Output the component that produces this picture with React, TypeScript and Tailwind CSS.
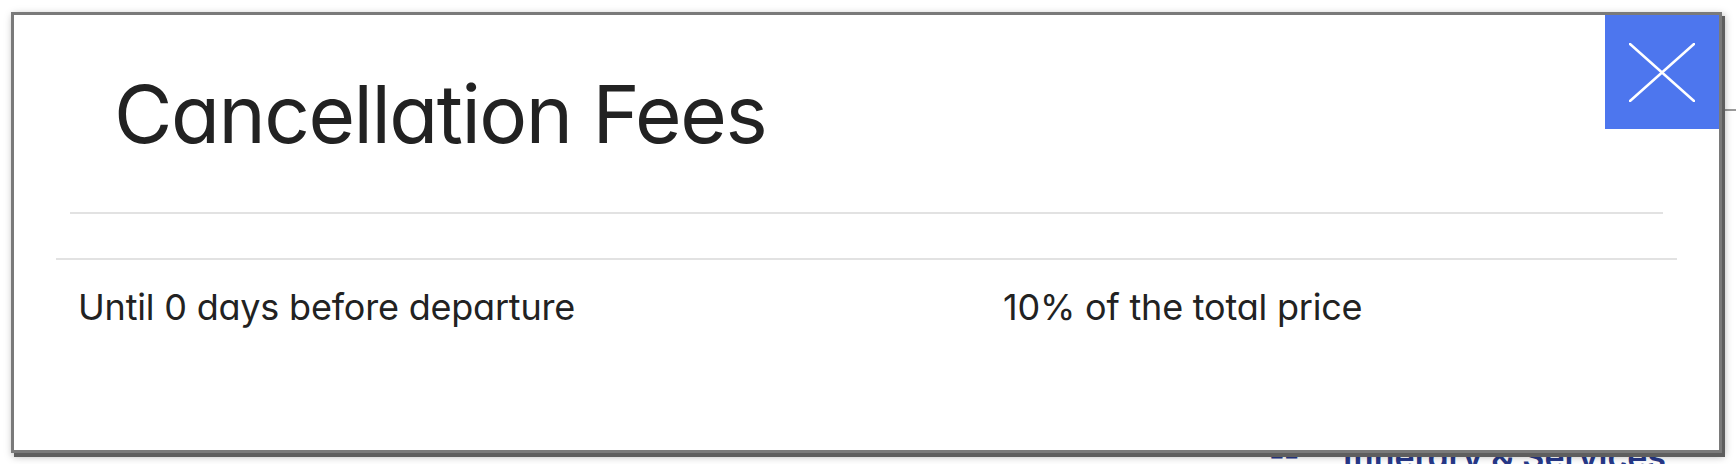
import * as React from 'react';

const fee = {
  label: 'Until 0 days before departure',
  value: '10% of the total price',
};

const CloseIcon = () => (
  <svg width="66" height="59" viewBox="0 0 66 59" fill="none">
    <path d="M1 1 L65 58 M65 1 L1 58" stroke="white" strokeWidth="2.5" strokeLinecap="round" />
  </svg>
);

const App = () => {
  return (
    <main className="relative w-[1736px] h-[464px] overflow-hidden bg-white font-['Inter',sans-serif] [font-feature-settings:'cv11']">
      {/* page behind the modal */}
      <div className="flex justify-end pr-[70px] pt-[440px]">
        <div className="flex items-center gap-[44px] text-[34px] leading-none font-semibold text-[#27398a]">
          <span>☷</span>
          <span>Itinerary &amp; Services</span>
        </div>
      </div>
      <div className="absolute right-0 top-[109px] w-[14px] h-[2px] bg-[#9a9a9a]" />

      {/* modal */}
      <div className="absolute left-[11px] top-[12px] w-[1711px] h-[441px] border-[3px] border-[#7a7a7a] bg-white shadow-[3px_4px_0_#5e5e5e,2px_3px_8px_rgba(0,0,0,0.35)]">
        <button
          type="button"
          className="absolute right-0 top-0 flex w-[114px] h-[114px] items-center justify-center bg-[#4d76ee]"
        >
          <CloseIcon />
        </button>

        <div className="pl-[100px] pt-[59px]">
          <h1 className="text-[80px] leading-none font-normal tracking-[-1.5px] text-[#222]">Cancellation Fees</h1>
        </div>

        <div className="mx-[56px] mt-[58px] h-[2px] bg-[#e2e2e2]" />

        <div className="mx-[42px] mt-[44px] border-t-2 border-[#e2e2e2]">
          <div className="flex pt-[29px] pl-[22px] text-[36px] leading-none tracking-[-0.2px] text-[#222]">
            <div className="w-[925px]">{fee.label}</div>
            <div>{fee.value}</div>
          </div>
        </div>
      </div>
    </main>
  );
};

export default App;
